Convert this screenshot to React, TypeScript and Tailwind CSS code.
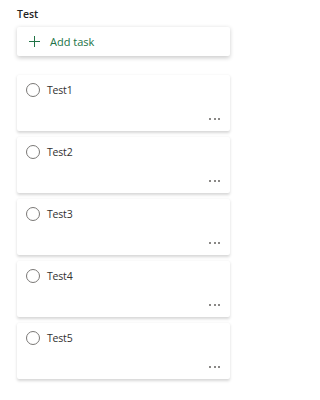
import React from 'react';

const TASKS = ['Test1', 'Test2', 'Test3', 'Test4', 'Test5'];

const PlusIcon = (): JSX.Element => (
    <svg width="11" height="11" viewBox="0 0 11 11" fill="none">
        <path d="M5.5 0V11M0 5.5H11" stroke="#217346" strokeWidth="1" />
    </svg>
);

const TaskCard = ({ name }: { name: string }): JSX.Element => (
    <div className="h-[56px] bg-white shadow-[0_1.5px_3px_rgba(0,0,0,0.16)] rounded-[2px] pl-[9px] pr-2 pt-2 flex flex-col">
        <div className="flex items-center gap-[7px] h-[14px]">
            <span className="w-[14px] h-[14px] rounded-full border border-[#7a7876] box-border" />
            <span className="text-[10.5px] text-[#323130] leading-none tracking-[-0.2px]">{name}</span>
        </div>
        <div className="flex justify-end mt-auto mb-[11px] pr-[2px]">
            <span className="flex gap-[2.5px]">
                <span className="w-[2px] h-[2px] bg-[#8a8886]" />
                <span className="w-[2px] h-[2px] bg-[#8a8886]" />
                <span className="w-[2px] h-[2px] bg-[#8a8886]" />
            </span>
        </div>
    </div>
);

export default function App(): JSX.Element {
    return (
        <div className="w-[247px] h-[400px] bg-white px-[17px] pt-[6px]" style={{ fontFamily: '"Open Sans", "Noto Sans", sans-serif' }}>
            <div className="text-[10.5px] font-semibold text-[#252423] leading-4 h-4">Test</div>
            <div className="mt-[5px] h-[29px] bg-white shadow-[0_1.5px_4px_rgba(0,0,0,0.2)] rounded-[2px] flex items-center pl-[12px] gap-[10px]">
                <PlusIcon />
                <span className="text-[11px] text-[#217346] leading-none">Add task</span>
            </div>
            <div className="mt-[19px] flex flex-col gap-[6px]">
                {TASKS.map(task => (
                    <TaskCard key={task} name={task} />
                ))}
            </div>
        </div>
    );
}
